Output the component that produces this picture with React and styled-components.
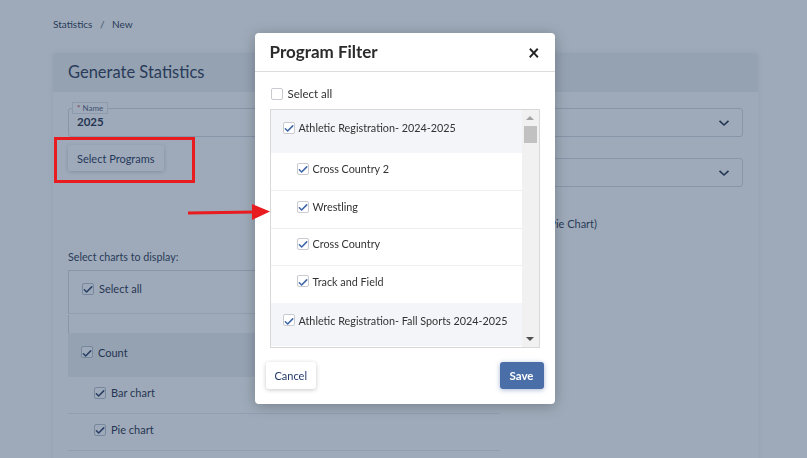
import React from "react";
import styled, { createGlobalStyle } from "styled-components";

const GlobalStyle = createGlobalStyle`
  html, body {
    margin: 0;
    padding: 0;
    background: #ffffff;
    font-family: "Lato", "Open Sans", sans-serif;
    color: #1f2b45;
  }
  * { box-sizing: border-box; }
`;

const programs = [
  {
    name: "Athletic Registration- 2024-2025",
    children: ["Cross Country 2", "Wrestling", "Cross Country", "Track and Field"],
  },
  {
    name: "Athletic Registration- Fall Sports 2024-2025",
    children: ["Football", "Volleyball", "Soccer", "Cheer", "Golf"],
  },
];

const Check = ({ checked, tone }) => (
  <Box $tone={tone}>
    {checked && (
      <svg width="11" height="9" viewBox="0 0 11 9">
        <path
          d="M1.5 4.8 L4 7.3 L9.6 1.6"
          fill="none"
          stroke={tone === "page" ? "#2b3d66" : "#3f66a8"}
          strokeWidth="1.7"
          strokeLinecap="round"
          strokeLinejoin="round"
        />
      </svg>
    )}
  </Box>
);

const Chevron = () => (
  <svg width="12" height="8" viewBox="0 0 12 8">
    <path d="M1.5 1.8 L6 6 L10.5 1.8" fill="none" stroke="#1f2b45" strokeWidth="1.6" />
  </svg>
);

const App = () => {
  return (
    <>
      <GlobalStyle />
      <Page>
        <Breadcrumb>
          Statistics <span>/</span> New
        </Breadcrumb>
        <Card>
          <CardHeader>Generate Statistics</CardHeader>
          <CardBody>
            <FormGrid>
              <Column>
                <Field>
                  <FloatLabel>
                    <em>*</em> Name
                  </FloatLabel>
                  2025
                </Field>
                <OutlineButton>Select Programs</OutlineButton>
              </Column>
              <Column>
                <SelectBox>
                  <Chevron />
                </SelectBox>
                <SelectBox>
                  <Chevron />
                </SelectBox>
                <RadioLine>(Pie Chart)</RadioLine>
              </Column>
            </FormGrid>
            <SectionLabel>Select charts to display:</SectionLabel>
            <ChartTable>
              <TableRow $boxed>
                <Check checked tone="page" />
                Select all
              </TableRow>
              <Spacer />
              <TableRow $shade>
                <Check checked tone="page" />
                Count
              </TableRow>
              <TableRow $indent>
                <Check checked tone="page" />
                Bar chart
              </TableRow>
              <TableRow $indent>
                <Check checked tone="page" />
                Pie chart
              </TableRow>
            </ChartTable>
          </CardBody>
        </Card>
      </Page>

      <Overlay>
        <Modal>
          <ModalHeader>
            <h3>Program Filter</h3>
            <Close>×</Close>
          </ModalHeader>
          <ModalBody>
            <SelectAll>
              <Check />
              Select all
            </SelectAll>
            <ListFrame>
              <ProgramList>
                {programs.map((p) => (
                  <React.Fragment key={p.name}>
                    <GroupRow>
                      <Check checked />
                      {p.name}
                    </GroupRow>
                    {p.children.map((c) => (
                      <ChildRow key={c}>
                        <Check checked />
                        {c}
                      </ChildRow>
                    ))}
                  </React.Fragment>
                ))}
              </ProgramList>
              <ScrollTrack>
                <ScrollArrow $dir="up" />
                <ScrollThumb />
                <ScrollArrow $dir="down" />
              </ScrollTrack>
            </ListFrame>
          </ModalBody>
          <ModalFooter>
            <CancelButton>Cancel</CancelButton>
            <SaveButton>Save</SaveButton>
          </ModalFooter>
        </Modal>
      </Overlay>

      <Highlight />
      <Arrow width="90" height="20" viewBox="0 0 90 20">
        <line x1="0" y1="11" x2="68" y2="10" stroke="#e81b1e" strokeWidth="3" />
        <polygon points="64,2 82,9.5 64,18" fill="#e81b1e" />
      </Arrow>
    </>
  );
};

const Page = styled.div`
  min-height: 458px;
  padding: 18px 49px 0 53px;
`;

const Breadcrumb = styled.div`
  font-size: 10px;
  color: #2a3550;
  span {
    margin: 0 5px;
    color: #555e70;
  }
`;

const Card = styled.div`
  margin-top: 23px;
  background: #ffffff;
  border-radius: 4px;
  box-shadow: 0 0 6px rgba(0, 0, 0, 0.08);
  min-height: 420px;
`;

const CardHeader = styled.div`
  background: #eef0f3;
  height: 39px;
  padding: 0 15px 2px;
  display: flex;
  align-items: center;
  font-size: 16.5px;
  color: #2c3650;
  border-radius: 4px 4px 0 0;
`;

const CardBody = styled.div`
  padding: 16px 15px;
`;

const FormGrid = styled.div`
  display: grid;
  grid-template-columns: 1fr 1fr;
  gap: 20px;
`;

const Column = styled.div`
  display: flex;
  flex-direction: column;
  align-items: flex-start;
  gap: 22px;
`;

const Field = styled.div`
  position: relative;
  width: 100%;
  height: 29px;
  border: 1px solid #d5d9e0;
  border-radius: 3px;
  padding: 6px 8px 0;
  font-size: 11.5px;
  font-weight: 700;
  color: #1f2b45;
  margin-bottom: -14px;
`;

const FloatLabel = styled.span`
  position: absolute;
  left: 3px;
  top: -7px;
  font-size: 8px;
  font-weight: 400;
  color: #55607a;
  background: #ffffff;
  border: 1px solid #dfe2e8;
  padding: 0 4px;
  line-height: 10px;
  em {
    color: #b04040;
    font-style: normal;
  }
`;

const OutlineButton = styled.button`
  height: 26px;
  padding: 0 9px;
  border: none;
  border-radius: 3px;
  background: #ffffff;
  box-shadow: 0 1px 4px rgba(0, 0, 0, 0.2);
  font-family: inherit;
  font-size: 11px;
  color: #1f2f55;
`;

const SelectBox = styled.div`
  width: 100%;
  height: 29px;
  border: 1px solid #d5d9e0;
  border-radius: 3px;
  padding: 0 12px;
  display: flex;
  align-items: center;
  justify-content: flex-end;
  &:nth-child(2) {
    margin-top: -1px;
  }
`;

const RadioLine = styled.div`
  margin-top: 8px;
  align-self: flex-end;
  margin-right: 146px;
  font-size: 11px;
  color: #2a3550;
`;

const SectionLabel = styled.div`
  margin-top: 20px;
  font-size: 10.7px;
  color: #2a3550;
  margin-bottom: 7px;
`;

const ChartTable = styled.div`
  width: 432px;
`;

const TableRow = styled.div`
  display: flex;
  align-items: center;
  gap: 5px;
  font-size: 11px;
  color: #1f2b45;
  height: ${(p) => (p.$boxed || p.$shade ? "44px" : "37px")};
  padding-left: ${(p) => (p.$indent ? "26px" : "13px")};
  padding-bottom: ${(p) => (p.$boxed ? "7px" : "5px")};
  background: ${(p) => (p.$shade ? "#eef0f3" : "transparent")};
  border: ${(p) => (p.$boxed ? "1px solid #d5d9e0" : "none")};
  border-bottom: 1px solid ${(p) => (p.$shade ? "transparent" : "#e6e9ee")};
`;

const Spacer = styled.div`
  height: 18px;
  margin-top: 1px;
  border-left: 1px solid #d5d9e0;
`;

const Box = styled.span`
  flex: none;
  width: 12px;
  height: 12px;
  border: 1px solid ${(p) => (p.$tone === "page" ? "#b9c0cc" : "#c9cbd0")};
  border-radius: 2px;
  background: #ffffff;
  display: inline-flex;
  align-items: center;
  justify-content: center;
  svg {
    margin-top: 2px;
  }
`;

const Overlay = styled.div`
  position: fixed;
  inset: 0;
  background: rgba(39, 66, 99, 0.45);
  display: flex;
  justify-content: center;
  align-items: flex-start;
  padding-top: 33px;
  padding-left: 2px;
`;

const Modal = styled.div`
  width: 300px;
  background: #ffffff;
  border-radius: 4px;
  box-shadow: 0 2px 14px rgba(0, 0, 0, 0.25);
`;

const ModalHeader = styled.div`
  height: 39px;
  padding: 0 15px 1px;
  display: flex;
  align-items: center;
  justify-content: space-between;
  border-bottom: 1px solid #dcdcdc;
  h3 {
    margin: 0;
    font-size: 17px;
    font-weight: 700;
    color: #2b2b2b;
  }
`;

const Close = styled.span`
  font-size: 20px;
  font-weight: 700;
  color: #222;
  line-height: 1;
`;

const ModalBody = styled.div`
  padding: 15px 15px 0;
`;

const SelectAll = styled.div`
  display: flex;
  align-items: center;
  gap: 5px;
  font-size: 11.5px;
  color: #333;
  height: 13px;
  margin-bottom: 9px;
  padding-left: 1px;
`;

const ListFrame = styled.div`
  display: flex;
  height: 239px;
  border: 1px solid #d8d8d8;
`;

const ProgramList = styled.div`
  flex: 1;
  min-width: 0;
  overflow: hidden;
`;

const ScrollTrack = styled.div`
  flex: none;
  width: 17px;
  background: #f1f1f1;
  display: flex;
  flex-direction: column;
  align-items: center;
`;

const ScrollArrow = styled.span`
  width: 0;
  height: 0;
  border-left: 4px solid transparent;
  border-right: 4px solid transparent;
  ${(p) =>
    p.$dir === "up"
      ? "border-bottom: 4px solid #a3a3a3; margin: 6px 0 6px;"
      : "border-top: 4px solid #505050; margin: auto 0 6px;"}
`;

const ScrollThumb = styled.span`
  width: 13px;
  height: 17px;
  background: #c1c1c1;
`;

const GroupRow = styled.div`
  display: flex;
  align-items: center;
  gap: 4px;
  height: 43px;
  padding: 0 0 8px 12px;
  background: #f4f5f9;
  font-size: 10.8px;
  color: #333;
  white-space: nowrap;
`;

const ChildRow = styled.div`
  display: flex;
  align-items: center;
  gap: 4px;
  height: 37.4px;
  padding: 0 0 6px 26px;
  font-size: 10.8px;
  color: #333;
  background: #ffffff;
  white-space: nowrap;
  & + & {
    border-top: 1px solid #eeeeee;
  }
`;

const ModalFooter = styled.div`
  display: flex;
  justify-content: space-between;
  padding: 14px 11px 15px;
`;

const CancelButton = styled.button`
  height: 27px;
  padding: 0 9px;
  border: none;
  border-radius: 3px;
  background: #ffffff;
  box-shadow: 0 1px 4px rgba(0, 0, 0, 0.22);
  font-family: inherit;
  font-size: 11px;
  color: #23396a;
`;

const SaveButton = styled.button`
  height: 27px;
  padding: 0 10px;
  border: none;
  border-radius: 3px;
  background: #4a6ea7;
  box-shadow: 0 1px 5px rgba(40, 80, 150, 0.4);
  font-family: inherit;
  font-size: 11.5px;
  font-weight: 700;
  color: #ffffff;
`;

const Highlight = styled.div`
  position: fixed;
  left: 54px;
  top: 137px;
  width: 141px;
  height: 46px;
  border: 3px solid #e81b1e;
`;

const Arrow = styled.svg`
  position: fixed;
  left: 188px;
  top: 202px;
`;

export default App;
